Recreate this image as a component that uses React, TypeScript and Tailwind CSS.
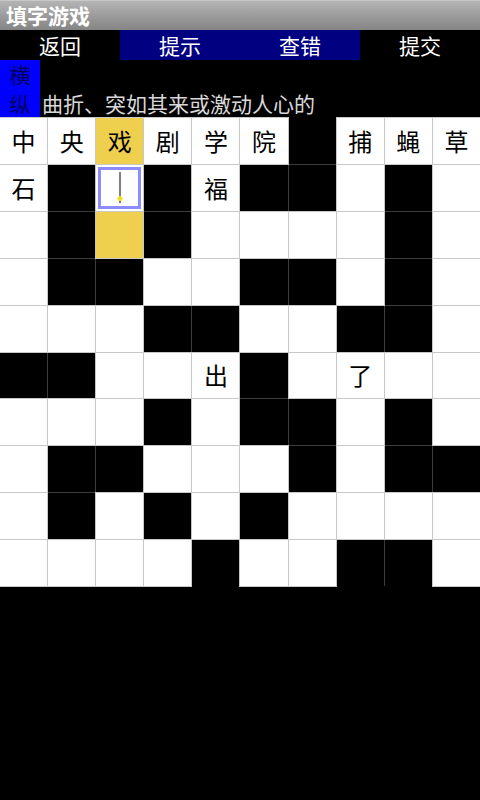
import React from "react";

type Cell = { t: "w" | "b" | "y" | "s"; c?: string };

const W = (c?: string): Cell => ({ t: "w", c });
const B: Cell = { t: "b" };

const rows: Cell[][] = [
  [W("中"), W("央"), { t: "y", c: "戏" }, W("剧"), W("学"), W("院"), B, W("捕"), W("蝇"), W("草")],
  [W("石"), B, { t: "s" }, B, W("福"), B, B, W(), B, W()],
  [W(), B, { t: "y" }, B, W(), W(), W(), W(), B, W()],
  [W(), B, B, W(), W(), B, B, W(), B, W()],
  [W(), W(), W(), B, B, W(), W(), B, B, W()],
  [B, B, W(), W(), W("出"), B, W(), W("了"), W(), W()],
  [W(), W(), W(), B, W(), B, B, W(), B, W()],
  [W(), B, B, W(), W(), W(), B, W(), B, B],
  [W(), B, W(), B, W(), B, W(), W(), W(), W()],
  [W(), W(), W(), W(), B, W(), W(), B, B, W()],
];

const font = { fontFamily: '"Noto Sans CJK SC", "Noto Sans", sans-serif' };

export default function App() {
  return (
    <div className="w-[480px] min-h-[800px] bg-black" style={font}>
      <div className="h-[30px] bg-gradient-to-b from-[#b4b4b4] to-[#858585] flex items-center pl-[6px] border-t border-[#c8c8c8]">
        <span className="text-white text-[21px] font-bold leading-none">填字游戏</span>
      </div>
      <div className="h-[30px] flex text-white text-[21px] leading-none">
        <div className="w-[120px] flex items-center justify-center">返回</div>
        <div className="w-[120px] flex items-center justify-center bg-[#000080]">提示</div>
        <div className="w-[120px] flex items-center justify-center bg-[#000080]">查错</div>
        <div className="w-[120px] flex items-center justify-center">提交</div>
      </div>
      <div className="h-[58px] flex">
        <div className="w-[40px] bg-[#0000ff] flex flex-col items-center text-[#00005a] text-[21px] leading-[29px]">
          <span>横</span>
          <span>纵</span>
        </div>
        <div className="flex-1 flex flex-col justify-end pl-[2px] text-[#d8d8d8] text-[21px] leading-[29px]">
          <span>曲折、突如其来或激动人心的</span>
        </div>
      </div>
      <div className="h-[468px] grid grid-cols-10 grid-rows-10 gap-px bg-[#3c3c3c]">
        {rows.flat().map((cell, i) => {
          if (cell.t === "b") return <div key={i} className="bg-black" />;
          if (cell.t === "s")
            return (
              <div key={i} className="relative bg-white shadow-[0_0_0_1px_#c8c8c8]">
                <div className="absolute inset-[2px] border-[3px] border-[#8c8cff]" />
                <div className="absolute left-1/2 -translate-x-1/2 top-[7px] bottom-[8px] w-[2px] bg-[#808080]" />
                <div className="absolute left-1/2 -translate-x-1/2 bottom-[10px] w-[5px] h-[5px] rounded-full bg-[#f0e020]" />
              </div>
            );
          return (
            <div
              key={i}
              className={`flex items-center justify-center text-black text-[24px] leading-none shadow-[0_0_0_1px_#c8c8c8] ${
                cell.t === "y" ? "bg-[#efcf4e]" : "bg-white"
              }`}
            >
              {cell.c}
            </div>
          );
        })}
      </div>
    </div>
  );
}
